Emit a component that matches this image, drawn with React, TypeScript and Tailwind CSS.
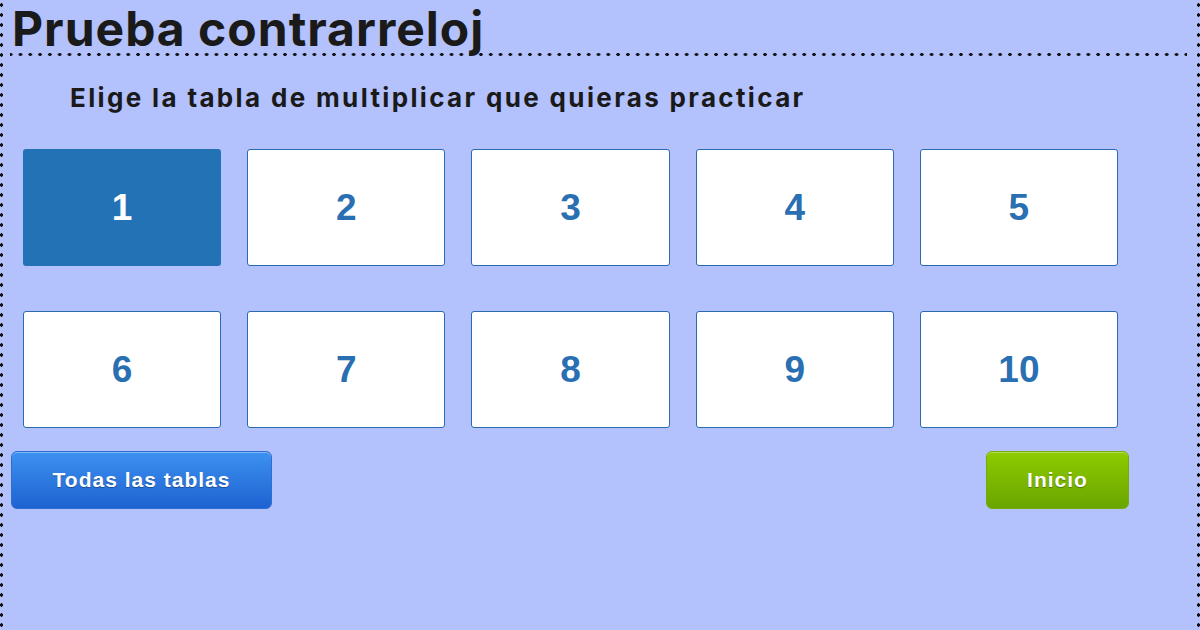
import React from 'react';

const tablas = [1, 2, 3, 4, 5, 6, 7, 8, 9, 10];

// columna de puntos para los bordes laterales
const DottedColumn: React.FC = () => (
  <div className="w-[3px] shrink-0 bg-[radial-gradient(circle,#111_1.5px,transparent_1.9px)] bg-[length:3px_10px] bg-repeat-y" />
);

export default function App() {
  const seleccionada = 1;

  return (
    <div className="flex h-[630px] w-[1200px] overflow-hidden bg-[#b3c1fd] font-['Inter','Liberation_Sans',sans-serif]">
      <DottedColumn />
      <div className="flex flex-1 flex-col">
        <h1 className="mx-[7px] mr-[10px] pt-[2px] pl-[2px] text-[48px] leading-[54px] font-bold tracking-[1px] text-[#1a1a1a] bg-[radial-gradient(circle,#111_1.5px,transparent_1.9px)] bg-[length:9.8px_3px] bg-bottom bg-repeat-x">
          Prueba contrarreloj
        </h1>
        <p className="mt-[27px] pl-[67px] text-[26px] leading-[30px] font-bold tracking-[2.35px] text-[#1a1a1a]">
          Elige la tabla de multiplicar que quieras practicar
        </p>

        <div className="mt-[36px] ml-[20px] grid w-[1095px] grid-cols-5 gap-x-[26px] gap-y-[45px]">
          {tablas.map((n) => (
            <button
              key={n}
              className={
                n === seleccionada
                  ? "flex h-[117px] items-center justify-center rounded-[3px] bg-[#2372b5] font-['Liberation_Sans',Arial,sans-serif] text-[37px] font-bold text-white"
                  : "flex h-[117px] items-center justify-center rounded-[3px] border border-[#2a6aae] bg-white font-['Liberation_Sans',Arial,sans-serif] text-[37px] font-bold text-[#2a6fb1]"
              }
            >
              {n}
            </button>
          ))}
        </div>

        <div className="mt-[23px] ml-[8px] mr-[68px] flex items-center justify-between font-['Liberation_Sans',Arial,sans-serif]">
          <button className="h-[58px] w-[261px] rounded-[6px] border border-[#2f6fd0] bg-gradient-to-b from-[#3d91f0] to-[#1f62d2] text-[21px] font-bold tracking-[1px] text-white [text-shadow:0_1px_1px_rgba(0,0,0,0.35)] shadow-[inset_0_1px_0_rgba(255,255,255,0.35)]">
            Todas las tablas
          </button>
          <button className="h-[58px] w-[143px] rounded-[6px] border border-[#75ad08] bg-gradient-to-b from-[#8ecb00] to-[#6aa500] text-[21px] font-bold tracking-[1px] text-white [text-shadow:0_1px_1px_rgba(0,0,0,0.35)] shadow-[inset_0_1px_0_rgba(255,255,255,0.35)]">
            Inicio
          </button>
        </div>
      </div>
      <DottedColumn />
    </div>
  );
}
